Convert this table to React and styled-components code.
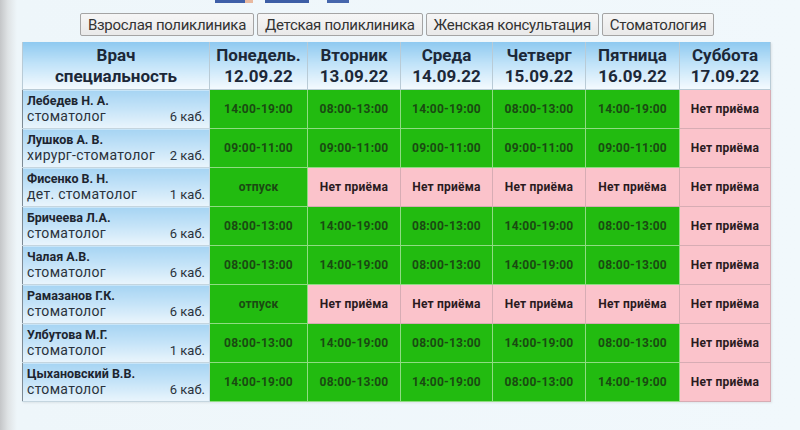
import React from 'react';
import styled, { createGlobalStyle } from 'styled-components';

const GlobalStyle = createGlobalStyle`
  html, body {
    margin: 0;
    padding: 0;
  }
  body {
    width: 800px;
    height: 430px;
    overflow: hidden;
    font-family: Roboto, "Noto Sans", "Liberation Sans", sans-serif;
    background: linear-gradient(90deg, #c4c6c8 0px, #dfe3e5 8px, #eef6fa 17px, #f1f8fc 100%);
  }
`;

const tabs = ['Взрослая поликлиника', 'Детская поликлиника', 'Женская консультация', 'Стоматология'];

const days = [
  { name: 'Понедель.', date: '12.09.22', width: 98 },
  { name: 'Вторник', date: '13.09.22', width: 93 },
  { name: 'Среда', date: '14.09.22', width: 92 },
  { name: 'Четверг', date: '15.09.22', width: 93 },
  { name: 'Пятница', date: '16.09.22', width: 94 },
  { name: 'Суббота', date: '17.09.22', width: 91 },
];

const OFF = 'Нет приёма';

const doctors = [
  { name: 'Лебедев Н. А.', spec: 'стоматолог', room: '6 каб.', slots: ['14:00-19:00', '08:00-13:00', '14:00-19:00', '08:00-13:00', '14:00-19:00', OFF] },
  { name: 'Лушков А. В.', spec: 'хирург-стоматолог', room: '2 каб.', slots: ['09:00-11:00', '09:00-11:00', '09:00-11:00', '09:00-11:00', '09:00-11:00', OFF] },
  { name: 'Фисенко В. Н.', spec: 'дет. стоматолог', room: '1 каб.', slots: ['отпуск', OFF, OFF, OFF, OFF, OFF] },
  { name: 'Бричеева Л.А.', spec: 'стоматолог', room: '6 каб.', slots: ['08:00-13:00', '14:00-19:00', '08:00-13:00', '14:00-19:00', '08:00-13:00', OFF] },
  { name: 'Чалая А.В.', spec: 'стоматолог', room: '6 каб.', slots: ['08:00-13:00', '14:00-19:00', '08:00-13:00', '14:00-19:00', '08:00-13:00', OFF] },
  { name: 'Рамазанов Г.К.', spec: 'стоматолог', room: '6 каб.', slots: ['отпуск', OFF, OFF, OFF, OFF, OFF] },
  { name: 'Улбутова М.Г.', spec: 'стоматолог', room: '1 каб.', slots: ['08:00-13:00', '14:00-19:00', '08:00-13:00', '14:00-19:00', '08:00-13:00', OFF] },
  { name: 'Цыхановский В.В.', spec: 'стоматолог', room: '6 каб.', slots: ['14:00-19:00', '08:00-13:00', '14:00-19:00', '08:00-13:00', '14:00-19:00', OFF] },
];

function App() {
  return (
    <Page>
      <GlobalStyle />
      <TopStrip>
        <Block $w={30} $c="#3f5fa8" />
        <Block $w={8} $c="#e8b9a0" />
        <Block $w={44} $c="#3d5ea6" $ml={12} />
        <Block $w={22} $c="#4666ac" $ml={18} />
      </TopStrip>

      <Tabs>
        {tabs.map((t) => (
          <Tab key={t}>{t}</Tab>
        ))}
      </Tabs>

      <Schedule>
        <colgroup>
          <col style={{ width: 187 }} />
          {days.map((d) => (
            <col key={d.date} style={{ width: d.width }} />
          ))}
        </colgroup>
        <thead>
          <tr>
            <HeadCell>Врач<br />специальность</HeadCell>
            {days.map((d) => (
              <HeadCell key={d.date}>{d.name}<br />{d.date}</HeadCell>
            ))}
          </tr>
        </thead>
        <tbody>
          {doctors.map((doc) => (
            <tr key={doc.name}>
              <DoctorCell>
                <DoctorName>{doc.name}</DoctorName>
                <DoctorMeta>
                  <span>{doc.spec}</span>
                  <span>{doc.room}</span>
                </DoctorMeta>
              </DoctorCell>
              {doc.slots.map((s, i) => (
                <SlotCell key={i} $off={s === OFF}>{s}</SlotCell>
              ))}
            </tr>
          ))}
        </tbody>
      </Schedule>
    </Page>
  );
}

export default App;

const Page = styled.div`
  padding: 0 0 0 22px;
`;

const TopStrip = styled.div`
  display: flex;
  height: 3px;
  padding-left: 193px;
`;

const Block = styled.div`
  width: ${(p) => p.$w}px;
  height: 3px;
  margin-left: ${(p) => p.$ml || 0}px;
  background: ${(p) => p.$c};
`;

const Tabs = styled.div`
  display: flex;
  gap: 3px;
  margin: 10px 0 6px 58px;
`;

const Tab = styled.div`
  height: 21px;
  padding: 0 7px;
  display: flex;
  align-items: center;
  font-size: 15px;
  letter-spacing: -0.3px;
  color: #333;
  background: linear-gradient(#f6f6f6, #e9e9e9);
  border: 1px solid #a4a4a4;
  border-radius: 2px;
`;

const Schedule = styled.table`
  border-collapse: collapse;
  table-layout: fixed;
  width: 748px;
  box-shadow: 1px 1px 2px rgba(0, 0, 0, 0.08);
`;

const HeadCell = styled.th`
  height: 47px;
  padding: 0;
  font-size: 17px;
  line-height: 21px;
  font-weight: 700;
  color: #1c2838;
  text-align: center;
  vertical-align: middle;
  background: linear-gradient(#8ec9f0 0%, #bfe2f8 45%, #f4fafe 100%);
  border: 1px solid #b9cbd6;
  border-top: none;
`;

const DoctorCell = styled.td`
  height: 38px;
  padding: 0 4px 0 4px;
  vertical-align: middle;
  background: linear-gradient(#a6d4f3 0%, #c6e4f8 50%, #eaf5fc 100%);
  border: 1px solid #c4d5df;
  border-left: 1px solid #7d8a94;
  color: #1d2530;
`;

const DoctorName = styled.div`
  font-size: 12.5px;
  font-weight: 700;
  line-height: 15px;
`;

const DoctorMeta = styled.div`
  display: flex;
  justify-content: space-between;
  align-items: baseline;
  font-size: 14px;
  letter-spacing: 0.3px;
  line-height: 17px;
  color: #2a323c;

  span:last-child {
    font-size: 13px;
    letter-spacing: 0;
  }
`;

const SlotCell = styled.td`
  height: 38px;
  padding: 0;
  text-align: center;
  vertical-align: middle;
  font-size: 12px;
  font-weight: 700;
  letter-spacing: 0.2px;
  color: ${(p) => (p.$off ? '#2a1a1e' : '#1a4a12')};
  background: ${(p) => (p.$off ? '#fbc3cb' : '#22bb10')};
  border: 1px solid ${(p) => (p.$off ? '#d7acb4' : '#8fdc82')};
`;
